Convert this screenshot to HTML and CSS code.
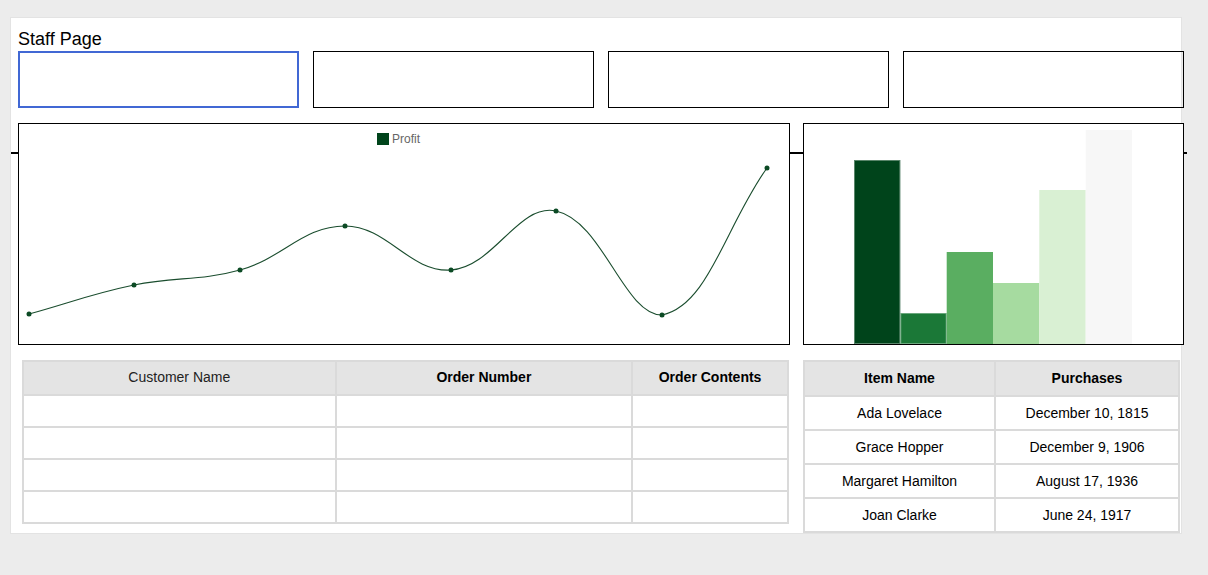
FILE: index.html
```html
<!DOCTYPE html>
<html>
<head>
<meta charset="utf-8">
<title>Staff Page</title>
<link rel="stylesheet" href="styles.css">
</head>
<body>
<div class="panel">
  <h1 class="title">Staff Page</h1>
  <div class="boxes">
    <div class="box box-focus"></div>
    <div class="box"></div>
    <div class="box"></div>
    <div class="box"></div>
  </div>
  <div class="charts">
    <div class="chart chart-line">
      <svg width="770" height="220" viewBox="0 0 770 220">
        <rect x="358" y="9" width="12" height="12" fill="#00441b"/>
        <text x="373" y="19" class="legend">Profit</text>
        <path d="M10,190 C52,178.4 72.4,169.9 115,161 C156.8,152.3 180.1,157.4 221,146 C264.5,133.8 284,102 326,102 C368.4,102 390.8,148.9 432,146 C475.2,142.9 499.2,78.9 537,87 C583.6,96.9 605,191 643,191 C689.4,181.5 706,102.8 748,44" fill="none" stroke="#1a4d2e" stroke-width="1.1"/>
        <g fill="#0b4a24">
          <circle cx="10" cy="190" r="2.5"/>
          <circle cx="115" cy="161" r="2.5"/>
          <circle cx="221" cy="146" r="2.5"/>
          <circle cx="326" cy="102" r="2.5"/>
          <circle cx="432" cy="146" r="2.5"/>
          <circle cx="537" cy="87" r="2.5"/>
          <circle cx="643" cy="191" r="2.5"/>
          <circle cx="748" cy="44" r="2.5"/>
        </g>
      </svg>
    </div>
    <div class="chart chart-bar">
      <svg width="379" height="220" viewBox="0 0 379 220">
        <rect x="50" y="36" width="46.3" height="184" fill="#00441b"/>
        <rect x="96.3" y="189" width="46.4" height="31" fill="#1b7837"/>
        <rect x="142.7" y="128" width="46.3" height="92" fill="#5aae61"/>
        <rect x="189" y="159" width="46.3" height="61" fill="#a6dba0"/>
        <rect x="235.3" y="66" width="46.4" height="154" fill="#d9f0d3"/>
        <rect x="281.7" y="6" width="46.3" height="214" fill="#f7f7f7"/>
        <g stroke="#ffffff" stroke-opacity="0.35" stroke-width="1" fill="none">
          <rect x="50.5" y="36.5" width="45.3" height="183"/>
          <rect x="96.8" y="189.5" width="45.4" height="30"/>
        </g>
      </svg>
    </div>
  </div>
  <div class="tables">
    <table class="grid grid-orders">
      <thead>
        <tr>
          <th class="plain">Customer Name</th>
          <th>Order Number</th>
          <th>Order Contents</th>
        </tr>
      </thead>
      <tbody>
        <tr><td></td><td></td><td></td></tr>
        <tr><td></td><td></td><td></td></tr>
        <tr><td></td><td></td><td></td></tr>
        <tr><td></td><td></td><td></td></tr>
      </tbody>
    </table>
    <table class="grid grid-items">
      <thead>
        <tr><th>Item Name</th><th>Purchases</th></tr>
      </thead>
      <tbody>
        <tr><td>Ada Lovelace</td><td>December 10, 1815</td></tr>
        <tr><td>Grace Hopper</td><td>December 9, 1906</td></tr>
        <tr><td>Margaret Hamilton</td><td>August 17, 1936</td></tr>
        <tr><td>Joan Clarke</td><td>June 24, 1917</td></tr>
      </tbody>
    </table>
  </div>
</div>
</body>
</html>
```

FILE: styles.css
```css
html, body {
  margin: 0;
  padding: 0;
}

body {
  background: #ececec;
  font-family: "Liberation Sans", Arial, sans-serif;
  color: #000;
  padding: 17px 0 0 10px;
}

.panel {
  background: #fff;
  border: 1px solid #e3e3e3;
  padding: 11px 0 0 7px;
  box-sizing: border-box;
  width: 1172px;
}

.title {
  margin: 0;
  font-size: 18px;
  line-height: 21px;
  font-weight: normal;
  color: #000;
}

.boxes {
  display: flex;
  gap: 14px;
  margin-top: 1px;
  width: 1166px;
}

.box {
  flex: 0 0 281px;
  height: 57px;
  box-sizing: border-box;
  border: 1px solid #000;
}

.box-focus {
  border: 2px solid #4168d4;
}

.charts {
  position: relative;
  display: grid;
  grid-template-columns: 772px 381px;
  gap: 13px;
  margin-top: 15px;
}

.charts::before {
  content: "";
  position: absolute;
  left: -7px;
  top: 29px;
  width: 1176px;
  height: 2px;
  background: #000;
}

.chart {
  position: relative;
  height: 222px;
  box-sizing: border-box;
  border: 1px solid #000;
  background: #fff;
}

.chart svg {
  display: block;
}

.legend {
  font-family: "Liberation Sans", Arial, sans-serif;
  font-size: 12px;
  fill: #666;
}

.tables {
  display: grid;
  grid-template-columns: 772px 381px;
  gap: 13px;
  margin-top: 15px;
  align-items: start;
}

.grid {
  border-collapse: collapse;
  font-size: 14px;
  table-layout: fixed;
}

.grid th,
.grid td {
  border: 2px solid #dadada;
  text-align: center;
  padding: 0;
  color: #000;
}

.grid th {
  background: #e4e4e4;
  font-weight: bold;
  padding-bottom: 2px;
}

.grid th.plain {
  font-weight: normal;
  color: #222;
}

.grid-orders {
  margin-left: 4px;
  width: 767px;
}

.grid-orders th:nth-child(1) { width: 309px; }
.grid-orders th:nth-child(2) { width: 293px; }
.grid-orders th:nth-child(3) { width: 153px; }

.grid-orders thead tr { height: 34px; }
.grid-orders tbody tr { height: 32px; }

.grid-items {
  width: 377px;
}

.grid-items th:nth-child(1) { width: 189px; }
.grid-items th:nth-child(2) { width: 182px; }

.grid-items thead tr { height: 35px; }
.grid-items tbody tr { height: 34px; }
```
